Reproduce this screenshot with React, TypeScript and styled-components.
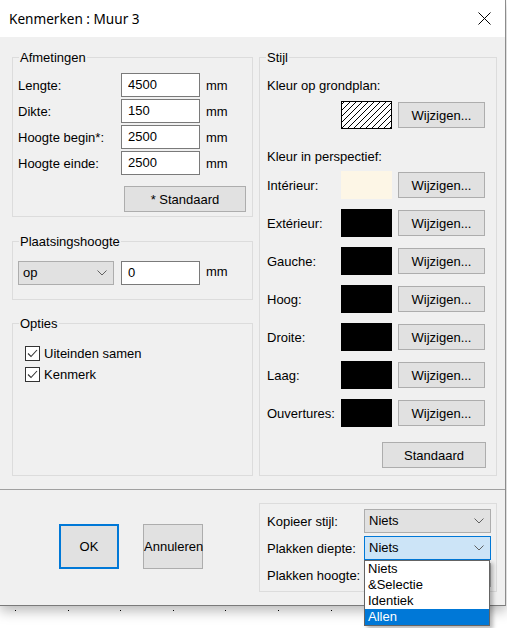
import React from "react";
import styled, { createGlobalStyle } from "styled-components";

const GlobalStyle = createGlobalStyle`
  html, body {
    margin: 0;
    padding: 0;
    background: #fff;
  }
  body {
    font-family: "Liberation Sans", Arial, sans-serif;
    font-size: 13px;
    color: #000;
  }
`;

const Page = styled.div`
  width: 507px;
  height: 628px;
  overflow: hidden;
  background: #fff;
`;

const Dialog = styled.div`
  box-sizing: border-box;
  width: 506px;
  height: 606px;
  border-right: 1px solid #8c8c8c;
  border-bottom: 1px solid #7a7a7a;
  background: #f0f0f0;
  display: flex;
  flex-direction: column;
  box-shadow: 0 5px 12px rgba(0, 0, 0, 0.28);
`;

const TitleBar = styled.div`
  height: 37px;
  flex: none;
  background: #fff;
  display: flex;
  align-items: center;
  justify-content: space-between;
  padding: 0 14px 0 9px;
  font-family: "Noto Sans", "Open Sans", sans-serif;
  font-size: 13.6px;
`;

const TopArea = styled.div`
  height: 452px;
  flex: none;
  box-sizing: border-box;
  padding: 20px 0 0 12px;
  display: grid;
  grid-template-columns: 241px 238px;
  column-gap: 6px;
  align-items: start;
`;

const Separator = styled.div`
  height: 1px;
  flex: none;
  background: #a0a0a0;
`;

const BottomArea = styled.div`
  flex: 1;
  box-sizing: border-box;
  padding: 13px 0 0 12px;
  display: grid;
  grid-template-columns: 241px 238px;
  column-gap: 6px;
  align-items: start;
`;

const Column = styled.div`
  display: flex;
  flex-direction: column;
`;

const Group = styled.div<{ $h: number; $gap?: number; $pad: string }>`
  position: relative;
  box-sizing: border-box;
  height: ${(p) => p.$h}px;
  margin-top: ${(p) => p.$gap ?? 0}px;
  border: 1px solid #dcdcdc;
  padding: ${(p) => p.$pad};
`;

const Legend = styled.span`
  position: absolute;
  top: -8px;
  left: 6px;
  padding: 0 1px;
  line-height: 15px;
  background: #f0f0f0;
`;

const FieldGrid = styled.div`
  display: grid;
  grid-template-columns: 97px 79px auto;
  column-gap: 6px;
  row-gap: 2px;
  align-items: center;
`;

const Label = styled.span`
  white-space: nowrap;
`;

const Field = styled.input`
  box-sizing: border-box;
  width: 79px;
  height: 24px;
  margin: 0;
  border: 1px solid #7a7a7a;
  background: #fff;
  padding: 0 0 1px 6px;
  font: inherit;
  color: #000;
  outline: none;
`;

const Button = styled.button<{ $w: number; $h?: number; $default?: boolean }>`
  box-sizing: border-box;
  width: ${(p) => p.$w}px;
  height: ${(p) => p.$h ?? 26}px;
  margin: 0;
  padding: 0;
  border: ${(p) => (p.$default ? "2px solid #0078d7" : "1px solid #adadad")};
  background: #e1e1e1;
  font: inherit;
  color: #000;
  white-space: nowrap;
`;

const ButtonRow = styled.div<{ $top: number }>`
  display: flex;
  justify-content: flex-end;
  margin-top: ${(p) => p.$top}px;
`;

const InlineRow = styled.div`
  display: flex;
  align-items: center;
  gap: 7px;
`;

const SelectBox = styled.div<{ $w: number; $focused?: boolean }>`
  position: relative;
  box-sizing: border-box;
  width: ${(p) => p.$w}px;
  height: 24px;
  display: flex;
  align-items: center;
  justify-content: space-between;
  padding: 0 6px 1px 4px;
  border: 1px solid ${(p) => (p.$focused ? "#0078d7" : "#adadad")};
  background: ${(p) => (p.$focused ? "#cce4f7" : "#e1e1e1")};
`;

const SelectValue = styled.span<{ $hidden?: boolean }>`
  visibility: ${(p) => (p.$hidden ? "hidden" : "visible")};
`;

const Unit = styled.span`
  margin-left: -1px;
  padding-bottom: 4px;
`;

const CheckList = styled.div`
  display: flex;
  flex-direction: column;
  gap: 6px;
`;

const CheckRow = styled.label`
  display: flex;
  align-items: center;
  gap: 4px;
  height: 15px;
`;

const CheckBox = styled.span`
  box-sizing: border-box;
  width: 15px;
  height: 15px;
  border: 1px solid #333;
  background: #fff;
  display: flex;
  align-items: center;
  justify-content: center;
`;

const StyleHeading = styled.div<{ $top: number }>`
  line-height: 16px;
  margin-top: ${(p) => p.$top}px;
`;

const ColorRow = styled.div<{ $top: number }>`
  display: grid;
  grid-template-columns: 68px 51px 87px;
  column-gap: 6px;
  align-items: center;
  height: 28px;
  margin-top: ${(p) => p.$top}px;
`;

const Swatch = styled.div<{ $color: string }>`
  width: 51px;
  height: 28px;
  background: ${(p) => p.$color};
`;

const StyleColumn = styled.div`
  display: flex;
  flex-direction: column;
`;

const ButtonPair = styled.div`
  display: flex;
  gap: 24px;
  padding: 21px 0 0 47px;
`;

const CopyGrid = styled.div`
  display: grid;
  grid-template-columns: 97px 127px;
  row-gap: 3px;
  align-items: center;
`;

const DropList = styled.ul`
  position: absolute;
  left: -1px;
  top: 23px;
  z-index: 2;
  box-sizing: border-box;
  width: 126px;
  margin: 0;
  padding: 0;
  list-style: none;
  border: 1px solid #646464;
  background: #fff;
  box-shadow: 3px 3px 4px rgba(0, 0, 0, 0.28);
`;

const DropItem = styled.li<{ $selected?: boolean }>`
  height: 16px;
  line-height: 16px;
  padding-left: 3px;
  background: ${(p) => (p.$selected ? "#0078d7" : "transparent")};
  color: ${(p) => (p.$selected ? "#fff" : "#000")};
`;

const Dots = styled.div`
  display: flex;
  gap: 51.6px;
  padding: 4px 0 0 15px;
`;

const Dot = styled.span`
  width: 1px;
  height: 1px;
  flex: none;
  background: #000;
`;

const Chevron = () => (
  <svg width="10" height="6" viewBox="0 0 10 6">
    <polyline points="0.5,0.5 5,5 9.5,0.5" fill="none" stroke="#606060" strokeWidth="1" />
  </svg>
);

const CloseIcon = () => (
  <svg width="13" height="13" viewBox="0 0 13 13">
    <path d="M0.5 0.5 L12.5 12.5 M12.5 0.5 L0.5 12.5" stroke="#000" strokeWidth="1" />
  </svg>
);

const CheckMark = () => (
  <svg width="13" height="13" viewBox="0 0 13 13">
    <polyline points="2,6.5 5,9.5 11,3" fill="none" stroke="#333" strokeWidth="1.1" />
  </svg>
);

const HatchSwatch = () => (
  <svg width="51" height="28" viewBox="0 0 51 28">
    <rect x="0.5" y="0.5" width="50" height="27" fill="#fff" stroke="#000" />
    {Array.from({ length: 14 }, (_, i) => {
      const x = -24 + i * 6;
      return <line key={i} x1={x} y1={28} x2={x + 28} y2={0} stroke="#000" strokeWidth="1" />;
    })}
    <rect x="0.5" y="0.5" width="50" height="27" fill="none" stroke="#000" />
  </svg>
);

const Select = ({
  value,
  width,
  focused,
  covered,
  children
}: {
  value: string;
  width: number;
  focused?: boolean;
  covered?: boolean;
  children?: React.ReactNode;
}) => (
  <SelectBox $w={width} $focused={focused}>
    <SelectValue $hidden={covered}>{value}</SelectValue>
    <Chevron />
    {children}
  </SelectBox>
);

const perspectiveColors = [
  { label: "Intérieur:", color: "#fdf6e6" },
  { label: "Extérieur:", color: "#000" },
  { label: "Gauche:", color: "#000" },
  { label: "Hoog:", color: "#000" },
  { label: "Droite:", color: "#000" },
  { label: "Laag:", color: "#000" },
  { label: "Ouvertures:", color: "#000" }
];

const dimensions = [
  { label: "Lengte:", value: "4500" },
  { label: "Dikte:", value: "150" },
  { label: "Hoogte begin*:", value: "2500" },
  { label: "Hoogte einde:", value: "2500" }
];

const App = () => {
  return (
    <Page>
      <GlobalStyle />
      <Dialog>
        <TitleBar>
          <span>Kenmerken : Muur 3</span>
          <CloseIcon />
        </TitleBar>

        <TopArea>
          <Column>
            <Group $h={160} $pad="15px 6px 0 5px">
              <Legend>Afmetingen</Legend>
              <FieldGrid>
                {dimensions.map((d) => (
                  <React.Fragment key={d.label}>
                    <Label>{d.label}</Label>
                    <Field defaultValue={d.value} />
                    <Label>mm</Label>
                  </React.Fragment>
                ))}
              </FieldGrid>
              <ButtonRow $top={11}>
                <Button $w={122}>* Standaard</Button>
              </ButtonRow>
            </Group>

            <Group $h={59} $gap={24} $pad="19px 0 0 5px">
              <Legend>Plaatsingshoogte</Legend>
              <InlineRow>
                <Select value="op" width={96} />
                <Field defaultValue="0" />
                <Unit>mm</Unit>
              </InlineRow>
            </Group>

            <Group $h={153} $gap={23} $pad="22px 0 0 12px">
              <Legend>Opties</Legend>
              <CheckList>
                <CheckRow>
                  <CheckBox>
                    <CheckMark />
                  </CheckBox>
                  Uiteinden samen
                </CheckRow>
                <CheckRow>
                  <CheckBox>
                    <CheckMark />
                  </CheckBox>
                  Kenmerk
                </CheckRow>
              </CheckList>
            </Group>
          </Column>

          <Group $h={419} $pad="0 10px 0 7px">
            <Legend>Stijl</Legend>
            <StyleColumn>
              <StyleHeading $top={20}>Kleur op grondplan:</StyleHeading>
              <ColorRow $top={7}>
                <span />
                <HatchSwatch />
                <Button $w={87}>Wijzigen...</Button>
              </ColorRow>
              <StyleHeading $top={20}>Kleur in perspectief:</StyleHeading>
              {perspectiveColors.map((c, i) => (
                <ColorRow key={c.label} $top={i === 0 ? 6 : 10}>
                  <Label>{c.label}</Label>
                  <Swatch $color={c.color} />
                  <Button $w={87}>Wijzigen...</Button>
                </ColorRow>
              ))}
              <ButtonRow $top={15}>
                <Button $w={104}>Standaard</Button>
              </ButtonRow>
            </StyleColumn>
          </Group>
        </TopArea>

        <Separator />

        <BottomArea>
          <ButtonPair>
            <Button $w={60} $h={45} $default>
              OK
            </Button>
            <Button $w={60} $h={45}>
              Annuleren
            </Button>
          </ButtonPair>

          <Group $h={89} $pad="5px 5px 0 7px">
            <CopyGrid>
              <Label>Kopieer stijl:</Label>
              <Select value="Niets" width={127} />
              <Label>Plakken diepte:</Label>
              <Select value="Niets" width={127} focused>
                <DropList>
                  <DropItem>Niets</DropItem>
                  <DropItem>&amp;Selectie</DropItem>
                  <DropItem>Identiek</DropItem>
                  <DropItem $selected>Allen</DropItem>
                </DropList>
              </Select>
              <Label>Plakken hoogte:</Label>
              <Select value="Niets" width={127} covered />
            </CopyGrid>
          </Group>
        </BottomArea>
      </Dialog>
      <Dots>
        {Array.from({ length: 10 }, (_, i) => (
          <Dot key={i} />
        ))}
      </Dots>
    </Page>
  );
};

export default App;
